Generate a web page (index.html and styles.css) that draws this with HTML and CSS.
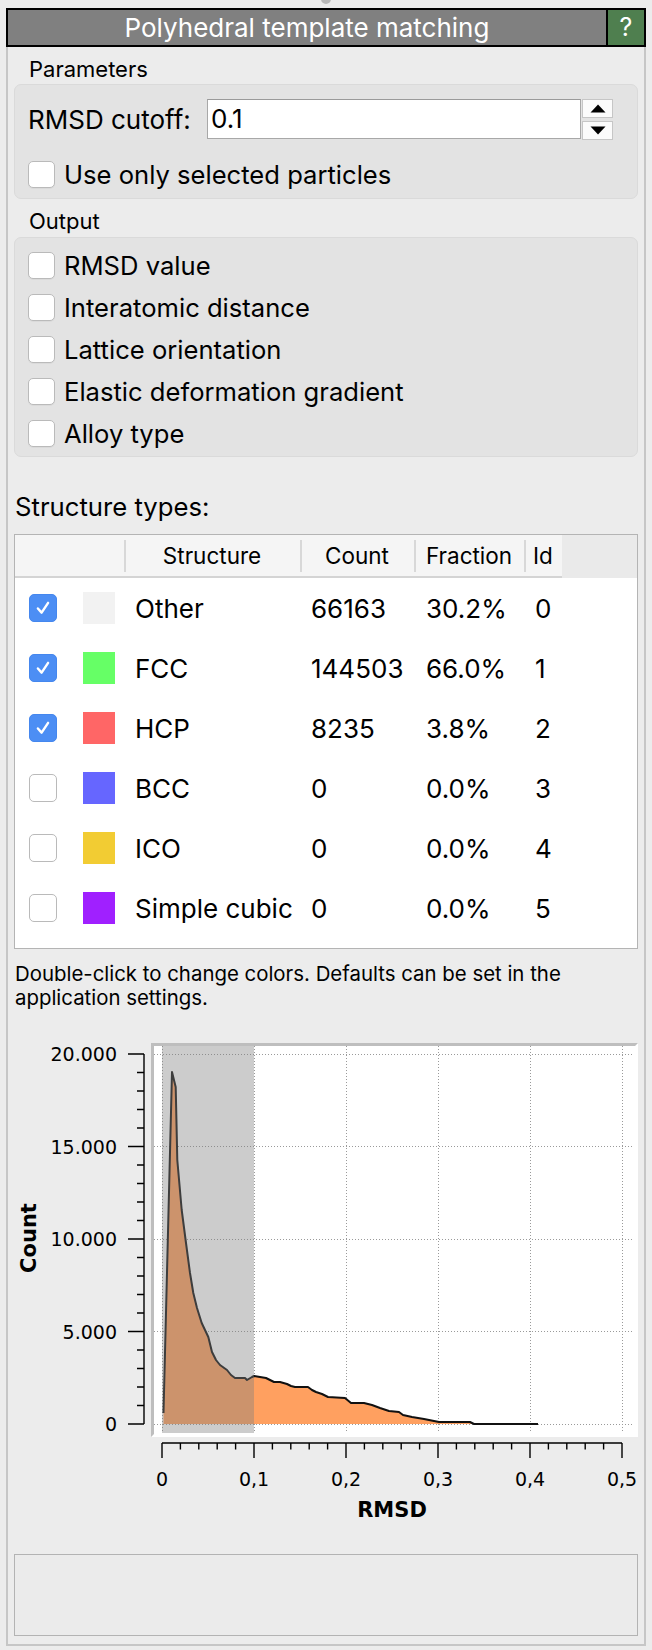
FILE: index.html
```html
<!DOCTYPE html>
<html>
<head>
<meta charset="utf-8">
<title>Polyhedral template matching</title>
<link rel="stylesheet" href="styles.css">
</head>
<body>
<div class="app">
  <div class="handle"></div>
  <div class="titlebar">
    <div class="title">Polyhedral template matching</div>
    <div class="help">?</div>
  </div>
  <div class="panel">
    <div class="group-title">Parameters</div>
    <div class="group group-params">
      <div class="spin-row">
        <span class="field-label">RMSD cutoff:</span>
        <div class="field">0.1</div>
        <div class="spin">
          <div class="spin-btn"><svg width="16" height="9" viewBox="0 0 16 9"><path d="M8 0.5 L15.5 8.5 L0.5 8.5 Z" fill="#000"/></svg></div>
          <div class="spin-btn"><svg width="16" height="9" viewBox="0 0 16 9"><path d="M0.5 0.5 L15.5 0.5 L8 8.5 Z" fill="#000"/></svg></div>
        </div>
      </div>
      <div class="check-row first-check"><span class="cb"></span><span>Use only selected particles</span></div>
    </div>

    <div class="group-title second">Output</div>
    <div class="group group-output">
      <div class="check-row"><span class="cb"></span><span>RMSD value</span></div>
      <div class="check-row"><span class="cb"></span><span>Interatomic distance</span></div>
      <div class="check-row"><span class="cb"></span><span>Lattice orientation</span></div>
      <div class="check-row"><span class="cb"></span><span>Elastic deformation gradient</span></div>
      <div class="check-row"><span class="cb"></span><span>Alloy type</span></div>
    </div>

    <div class="section-label">Structure types:</div>
    <div class="table">
      <div class="thead">
        <div class="th"></div>
        <div class="th sep">Structure</div>
        <div class="th sep">Count</div>
        <div class="th sep">Fraction</div>
        <div class="th sep">Id</div>
        <div class="th-fill"></div>
      </div>
      <div class="tr">
        <div class="c-sel"><span class="tcb on"><svg viewBox="0 0 28 28"><path d="M8.5 14.5 L12.5 19 L19.5 8.5" /></svg></span><span class="swatch sw-other"></span></div>
        <div class="c-name">Other</div><div class="c-count">66163</div><div class="c-frac">30.2%</div><div class="c-id">0</div><div></div>
      </div>
      <div class="tr">
        <div class="c-sel"><span class="tcb on"><svg viewBox="0 0 28 28"><path d="M8.5 14.5 L12.5 19 L19.5 8.5" /></svg></span><span class="swatch sw-fcc"></span></div>
        <div class="c-name">FCC</div><div class="c-count">144503</div><div class="c-frac">66.0%</div><div class="c-id">1</div><div></div>
      </div>
      <div class="tr">
        <div class="c-sel"><span class="tcb on"><svg viewBox="0 0 28 28"><path d="M8.5 14.5 L12.5 19 L19.5 8.5" /></svg></span><span class="swatch sw-hcp"></span></div>
        <div class="c-name">HCP</div><div class="c-count">8235</div><div class="c-frac">3.8%</div><div class="c-id">2</div><div></div>
      </div>
      <div class="tr">
        <div class="c-sel"><span class="tcb"></span><span class="swatch sw-bcc"></span></div>
        <div class="c-name">BCC</div><div class="c-count">0</div><div class="c-frac">0.0%</div><div class="c-id">3</div><div></div>
      </div>
      <div class="tr">
        <div class="c-sel"><span class="tcb"></span><span class="swatch sw-ico"></span></div>
        <div class="c-name">ICO</div><div class="c-count">0</div><div class="c-frac">0.0%</div><div class="c-id">4</div><div></div>
      </div>
      <div class="tr">
        <div class="c-sel"><span class="tcb"></span><span class="swatch sw-sc"></span></div>
        <div class="c-name">Simple cubic</div><div class="c-count">0</div><div class="c-frac">0.0%</div><div class="c-id">5</div><div></div>
      </div>
    </div>

    <p class="note">Double-click to change colors. Defaults can be set in the application settings.</p>

    <svg class="chart" viewBox="14 1010 624 536" xmlns="http://www.w3.org/2000/svg">
      <!-- canvas -->
      <rect x="151" y="1043" width="487" height="394" fill="#ffffff"/>
      <polygon points="151,1043 638,1043 635,1046 154,1046 154,1434 151,1437" fill="#bebebe"/>
      <!-- grid -->
      <g stroke="#9a9a9a" stroke-width="1" stroke-dasharray="1 2" fill="none">
        <path d="M154 1054.5H632M154 1146.5H632M154 1239.5H632M154 1331.5H632M154 1424.5H632"/>
        <path d="M162.5 1046V1431M254.5 1046V1431M346.5 1046V1431M438.5 1046V1431M530.5 1046V1431M622.5 1046V1431"/>
      </g>
      <!-- histogram -->
      <polygon fill="#ffa060" points="163.5,1424 163.5,1413 172,1072 175.7,1087 177.3,1160 181.7,1210 186,1243 190,1273 193.3,1293 197,1308 201.7,1323 205,1330 208.3,1337 212,1352 216,1360 220,1365 227,1370 231,1375 235,1378 245,1378 247,1380 252,1377 254,1376 260,1377 266,1378 270,1380 274,1382 280,1382 287,1384 291,1386 295,1387 308,1387 312,1390 316,1392 322,1394 328,1397 345,1398 351,1403 364,1403 368,1404 372,1405 380,1408 389,1411 399,1412 403,1415 412,1417 424,1419 434,1421 439,1422 470,1422 474,1424 538,1424"/>
      <polyline fill="none" stroke="#111" stroke-width="2" stroke-linejoin="round" points="163.5,1413 172,1072 175.7,1087 177.3,1160 181.7,1210 186,1243 190,1273 193.3,1293 197,1308 201.7,1323 205,1330 208.3,1337 212,1352 216,1360 220,1365 227,1370 231,1375 235,1378 245,1378 247,1380 252,1377 254,1376 260,1377 266,1378 270,1380 274,1382 280,1382 287,1384 291,1386 295,1387 308,1387 312,1390 316,1392 322,1394 328,1397 345,1398 351,1403 364,1403 368,1404 372,1405 380,1408 389,1411 399,1412 403,1415 412,1417 424,1419 434,1421 439,1422 470,1422 474,1424 538,1424"/>
      <!-- cutoff selection -->
      <rect x="162" y="1046" width="92" height="387" fill="rgba(128,128,128,0.4)"/>
      <!-- y axis -->
      <g stroke="#000" stroke-width="1.4" fill="none">
        <path d="M144 1054V1424"/>
        <path d="M128 1054H144M128 1146.5H144M128 1239H144M128 1331.5H144M128 1424H144"/>
        <path d="M137 1072.5H144M137 1091H144M137 1109.5H144M137 1128H144M137 1165H144M137 1183.5H144M137 1202H144M137 1220.5H144M137 1257.5H144M137 1276H144M137 1294.5H144M137 1313H144M137 1350H144M137 1368.5H144M137 1387H144M137 1405.5H144"/>
      </g>
      <g class="tick-label" text-anchor="end">
        <text x="117" y="1061">20.000</text>
        <text x="117" y="1153.5">15.000</text>
        <text x="117" y="1246">10.000</text>
        <text x="117" y="1338.5">5.000</text>
        <text x="117" y="1431">0</text>
      </g>
      <text class="axis-title" transform="translate(36 1238) rotate(-90)" text-anchor="middle">Count</text>
      <!-- x axis -->
      <g stroke="#000" stroke-width="1.4" fill="none">
        <path d="M162 1443H622"/>
        <path d="M162 1443V1458M254 1443V1458M346 1443V1458M438 1443V1458M530 1443V1458M622 1443V1458"/>
        <path d="M180.4 1443V1449.5M198.8 1443V1449.5M217.2 1443V1449.5M235.6 1443V1449.5M272.4 1443V1449.5M290.8 1443V1449.5M309.2 1443V1449.5M327.6 1443V1449.5M364.4 1443V1449.5M382.8 1443V1449.5M401.2 1443V1449.5M419.6 1443V1449.5M456.4 1443V1449.5M474.8 1443V1449.5M493.2 1443V1449.5M511.6 1443V1449.5M548.4 1443V1449.5M566.8 1443V1449.5M585.2 1443V1449.5M603.6 1443V1449.5"/>
      </g>
      <g class="tick-label" text-anchor="middle">
        <text x="162" y="1486">0</text>
        <text x="254" y="1486">0,1</text>
        <text x="346" y="1486">0,2</text>
        <text x="438" y="1486">0,3</text>
        <text x="530" y="1486">0,4</text>
        <text x="622" y="1486">0,5</text>
      </g>
      <text class="axis-title" x="392" y="1517" text-anchor="middle">RMSD</text>
    </svg>

    <div class="status-box"></div>
  </div>
</div>
</body>
</html>
```

FILE: styles.css
```css
* {
  box-sizing: border-box;
}

html, body {
  margin: 0;
  padding: 0;
}

body {
  background: #ececec;
  font-family: "Inter", "Liberation Sans", sans-serif;
  color: #000;
  width: 652px;
}

.app {
  position: relative;
  padding-top: 8px;
}

.handle {
  position: absolute;
  left: 321px;
  top: -6px;
  width: 10px;
  height: 10px;
  border-radius: 50%;
  background: #b8b8b8;
}

.titlebar {
  display: flex;
  margin: 0 6px;
  height: 39px;
  border: 2px solid #000;
  background: #808080;
}

.title {
  flex: 1;
  color: #fff;
  font-size: 26px;
  line-height: 35px;
  text-align: center;
}

.help {
  width: 38px;
  border-left: 2px solid #000;
  background: #4f7f4f;
  color: #fff;
  font-size: 25px;
  line-height: 35px;
  text-align: center;
}

.panel {
  margin: 0 6px;
  border: 2px solid #c6c6c6;
  border-top: 0;
  padding: 8px 6px;
}

.group-title {
  height: 28px;
  line-height: 28px;
  font-size: 22px;
  padding-left: 15px;
  margin-bottom: 1px;
}

.group-title.second {
  margin-top: 8px;
  margin-bottom: 2px;
}

.group {
  background: #e3e3e3;
  border: 1px solid #dadada;
  border-radius: 7px;
}

.group-params {
  padding: 14px 24px 9px 13px;
}

.group-output {
  padding: 6px 13px 2px 13px;
}

.spin-row {
  display: flex;
  align-items: center;
  height: 40px;
}

.field-label {
  width: 179px;
  font-size: 26px;
  flex: none;
}

.field {
  width: 374px;
  height: 40px;
  background: #fff;
  border: 1px solid #a8a8a8;
  border-top-color: #9a9a9a;
  font-size: 26px;
  line-height: 38px;
  padding-left: 3px;
  flex: none;
}

.spin {
  margin-left: 1px;
  width: 31px;
  height: 41px;
  display: flex;
  flex-direction: column;
  justify-content: space-between;
  flex: none;
}

.spin-btn {
  height: 19px;
  background: #fbfbfb;
  border: 1px solid #c6c6c6;
  display: flex;
  align-items: center;
  justify-content: center;
}

.spin-btn svg {
  display: block;
}

.check-row {
  display: flex;
  align-items: center;
  height: 42px;
  font-size: 25.6px;
}

.check-row.first-check {
  height: 30px;
  margin-top: 20px;
}

.cb {
  width: 27px;
  height: 27px;
  border-radius: 5px;
  background: #fff;
  border: 1px solid #bababa;
  box-shadow: 0 1px 0 rgba(0, 0, 0, 0.04);
  margin-right: 9px;
  flex: none;
}

.section-label {
  margin-top: 35px;
  height: 30px;
  line-height: 30px;
  font-size: 25.7px;
  padding-left: 1px;
  margin-bottom: 12px;
}

.table {
  border: 1px solid #b4b4b4;
  background: #fff;
  padding-bottom: 10px;
}

.thead,
.tr {
  display: grid;
  grid-template-columns: 109px 176px 114px 110px 38px 1fr;
}

.thead {
  height: 43px;
}

.th {
  background: #f5f5f5;
  border-bottom: 2px solid #d4d4d4;
  font-size: 22.5px;
  line-height: 41px;
  text-align: center;
}

.th.sep {
  background: linear-gradient(#d8d8d8, #d8d8d8) 0 5px / 2px 32px no-repeat, #f5f5f5;
}

.th-fill {
  background: #eaeaea;
}

.tr {
  height: 60px;
  align-items: center;
  font-size: 26px;
}

.c-sel {
  display: flex;
  align-items: center;
  padding-left: 14px;
  gap: 26px;
}

.tcb {
  width: 28px;
  height: 28px;
  border-radius: 5px;
  background: #fff;
  border: 1px solid #bababa;
  flex: none;
}

.tcb.on {
  background: #4c8ef4;
  border-color: #4587ee;
}

.tcb svg {
  display: block;
  width: 26px;
  height: 26px;
}

.tcb svg path {
  fill: none;
  stroke: #fff;
  stroke-width: 2.6;
  stroke-linecap: round;
  stroke-linejoin: round;
}

.swatch {
  width: 32px;
  height: 32px;
  flex: none;
}

.sw-other { background: #f2f2f2; }
.sw-fcc { background: #66ff66; }
.sw-hcp { background: #ff6666; }
.sw-bcc { background: #6666ff; }
.sw-ico { background: #f2cc33; }
.sw-sc { background: #a020ff; }

.c-name { padding-left: 11px; white-space: nowrap; }
.c-count { padding-left: 11px; }
.c-frac { padding-left: 12px; }
.c-id { padding-left: 11px; }

.note {
  margin: 13px 0 0 1px;
  font-size: 20.4px;
  line-height: 24px;
  height: 48px;
  max-width: 600px;
}

.chart {
  display: block;
  width: 624px;
  height: 536px;
}

.tick-label {
  font-family: "DejaVu Sans", sans-serif;
  font-size: 19px;
  fill: #000;
}

.axis-title {
  font-family: "DejaVu Sans", sans-serif;
  font-weight: bold;
  font-size: 21px;
  fill: #000;
}

.status-box {
  margin-top: 8px;
  height: 82px;
  border: 1px solid #b3b3b3;
  background: #ebebeb;
}
```
